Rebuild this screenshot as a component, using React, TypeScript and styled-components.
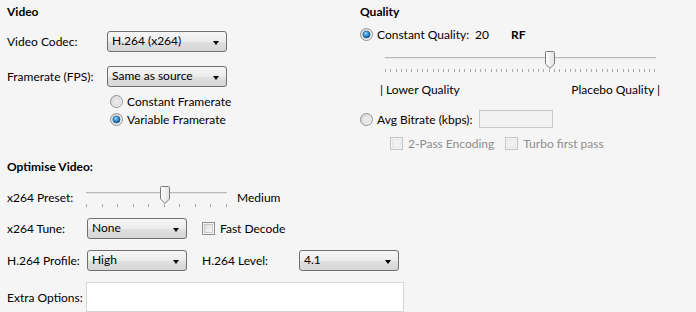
import styled, { createGlobalStyle } from "styled-components";

const GlobalStyle = createGlobalStyle`
  html, body {
    margin: 0;
    padding: 0;
    background: #f5f5f5;
  }
`;

const Page = styled.div`
  width: 696px;
  height: 312px;
  box-sizing: border-box;
  padding: 0 7px;
  overflow: hidden;
  background: #f5f5f5;
  color: #000;
  font-family: Lato, "Noto Sans", sans-serif;
  font-size: 12px;
`;

const Top = styled.div`
  display: flex;
  height: 152px;
`;

const Column = styled.div<{ $width?: number }>`
  display: flex;
  flex-direction: column;
  ${(p) => (p.$width ? `width: ${p.$width}px;` : "flex: 1;")}
`;

const SectionTitle = styled.div<{ $top?: number }>`
  margin-top: ${(p) => p.$top ?? 4}px;
  height: 16px;
  line-height: 16px;
  font-weight: 700;
`;

const Row = styled.div<{ $top: number; $height: number; $indent?: number }>`
  display: flex;
  align-items: center;
  margin-top: ${(p) => p.$top}px;
  height: ${(p) => p.$height}px;
  padding-left: ${(p) => p.$indent ?? 0}px;
  white-space: nowrap;
`;

const Label = styled.span<{ $width?: number; $disabled?: boolean; $left?: number }>`
  display: inline-block;
  ${(p) => (p.$width ? `width: ${p.$width}px;` : "")}
  margin-left: ${(p) => p.$left ?? 0}px;
  color: ${(p) => (p.$disabled ? "#8d8d8d" : "#000")};
`;

const Strong = styled.span<{ $left?: number }>`
  font-weight: 700;
  margin-left: ${(p) => p.$left ?? 0}px;
`;

const Value = styled.span<{ $left?: number }>`
  margin-left: ${(p) => p.$left ?? 0}px;
`;

const ComboBox = styled.div<{ $width: number }>`
  position: relative;
  box-sizing: border-box;
  width: ${(p) => p.$width}px;
  height: 21px;
  padding-left: 4px;
  line-height: 17px;
  border: 1px solid #707070;
  border-radius: 3px;
  background: linear-gradient(#f6f6f6 0%, #ececec 50%, #e0e0e0 51%, #d6d6d6 100%);
  &::after {
    content: "";
    position: absolute;
    right: 7px;
    top: 9px;
    border-left: 3.5px solid transparent;
    border-right: 3.5px solid transparent;
    border-top: 4px solid #000;
  }
`;

const TextBox = styled.div<{ $width: number; $height: number; $disabled?: boolean }>`
  box-sizing: border-box;
  width: ${(p) => p.$width}px;
  height: ${(p) => p.$height}px;
  border: 1px solid ${(p) => (p.$disabled ? "#c9c9c9" : "#d7d7d7")};
  background: ${(p) => (p.$disabled ? "#f2f2f2" : "#fff")};
`;

const Option = styled.div<{ $gap?: number; $left?: number }>`
  display: flex;
  align-items: center;
  gap: ${(p) => p.$gap ?? 4}px;
  margin-left: ${(p) => p.$left ?? 0}px;
  margin-right: 12px;
`;

const SliderBox = styled.div<{ $width: number; $left?: number }>`
  position: relative;
  width: ${(p) => p.$width}px;
  height: 22px;
  margin-left: ${(p) => p.$left ?? 0}px;
  flex: none;
`;

const Track = styled.div`
  margin-top: 6px;
  height: 1px;
  background: #b9b9b9;
  border-bottom: 1px solid #e6e6e6;
`;

const Ticks = styled.div`
  display: flex;
  justify-content: space-between;
  margin-top: 10px;
`;

const Tick = styled.span`
  width: 1px;
  height: 3px;
  background: #a9a9a9;
`;

const Thumb = styled.svg`
  position: absolute;
  top: 0;
`;

const ScaleLabels = styled.div`
  display: flex;
  justify-content: space-between;
  width: 280px;
  margin: 9px 0 0 20px;
  height: 16px;
  line-height: 16px;
`;

const Radio = ({ checked }: { checked?: boolean }) => (
  <svg width="13" height="13" viewBox="0 0 13 13">
    <defs>
      <linearGradient id="rOuter" x1="0" y1="0" x2="1" y2="1">
        <stop offset="0" stopColor="#d6d6d6" />
        <stop offset="1" stopColor="#fbfbfb" />
      </linearGradient>
      <radialGradient id="rDot" cx="0.4" cy="0.35" r="0.7">
        <stop offset="0" stopColor="#a8dcfb" />
        <stop offset="0.5" stopColor="#2b8fd6" />
        <stop offset="1" stopColor="#144a83" />
      </radialGradient>
    </defs>
    <circle cx="6.5" cy="6.5" r="6" fill="url(#rOuter)" stroke="#8f9091" />
    {checked ? (
      <circle cx="6.5" cy="6.5" r="3.6" fill="url(#rDot)" stroke="#1c5180" strokeWidth="0.6" />
    ) : (
      <circle cx="6.5" cy="6.5" r="3.8" fill="#e9e9e9" stroke="#d0d0d0" strokeWidth="0.6" />
    )}
  </svg>
);

const CheckBox = ({ disabled }: { disabled?: boolean }) => (
  <svg width="13" height="13" viewBox="0 0 13 13">
    <defs>
      <linearGradient id="cInner" x1="0" y1="0" x2="1" y2="1">
        <stop offset="0" stopColor="#d9d9d9" />
        <stop offset="1" stopColor="#fafafa" />
      </linearGradient>
    </defs>
    <rect x="0.5" y="0.5" width="12" height="12" fill="#f4f4f4" stroke={disabled ? "#c4c4c4" : "#8e8f8f"} />
    <rect
      x="2.5"
      y="2.5"
      width="8"
      height="8"
      fill={disabled ? "#f0f0f0" : "url(#cInner)"}
      stroke={disabled ? "#dedede" : "#b5b5b5"}
      strokeWidth="0.6"
    />
  </svg>
);

const Slider = ({
  width,
  ticks,
  position,
  left,
}: {
  width: number;
  ticks: number;
  position: number;
  left?: number;
}) => (
  <SliderBox $width={width} $left={left}>
    <Track />
    <Ticks>
      {Array.from({ length: ticks }, (_, i) => (
        <Tick key={i} />
      ))}
    </Ticks>
    <Thumb width="10" height="18" viewBox="0 0 10 18" style={{ left: Math.round(position * (width - 1)) - 4.5 }}>
      <defs>
        <linearGradient id="thumbFill" x1="0" y1="0" x2="1" y2="0">
          <stop offset="0" stopColor="#ffffff" />
          <stop offset="1" stopColor="#e2e2e2" />
        </linearGradient>
      </defs>
      <path
        d="M1.5 0.5 H8.5 A1 1 0 0 1 9.5 1.5 V13 L5 17.3 L0.5 13 V1.5 A1 1 0 0 1 1.5 0.5 Z"
        fill="url(#thumbFill)"
        stroke="#7a7a7a"
      />
    </Thumb>
  </SliderBox>
);

export default function App() {
  return (
    <Page>
      <GlobalStyle />
      <Top>
        <Column $width={353}>
          <SectionTitle>Video</SectionTitle>
          <Row $top={11} $height={21}>
            <Label $width={100}>Video Codec:</Label>
            <ComboBox $width={120}>H.264 (x264)</ComboBox>
          </Row>
          <Row $top={14} $height={21}>
            <Label $width={100}>Framerate (FPS):</Label>
            <ComboBox $width={120}>Same as source</ComboBox>
          </Row>
          <Row $top={5} $height={18} $indent={103}>
            <Option>
              <Radio />
              <Label>Constant Framerate</Label>
            </Option>
          </Row>
          <Row $top={0} $height={18} $indent={103}>
            <Option>
              <Radio checked />
              <Label>Variable Framerate</Label>
            </Option>
          </Row>
        </Column>
        <Column>
          <SectionTitle>Quality</SectionTitle>
          <Row $top={6} $height={16}>
            <Option>
              <Radio checked />
              <Label $width={87}>Constant Quality:</Label>
            </Option>
            <Value $left={-1}>20</Value>
            <Strong $left={22}>RF</Strong>
          </Row>
          <Row $top={9} $height={22}>
            <Slider width={271} ticks={52} position={31 / 51} left={25} />
          </Row>
          <ScaleLabels>
            <span>| Lower Quality</span>
            <span>Placebo Quality |</span>
          </ScaleLabels>
          <Row $top={12} $height={18}>
            <Option>
              <Radio />
              <Label $width={90}>Avg Bitrate (kbps):</Label>
            </Option>
            <TextBox $width={74} $height={18} $disabled />
          </Row>
          <Row $top={7} $height={16} $indent={30}>
            <Option $gap={5}>
              <CheckBox disabled />
              <Label $disabled>2-Pass Encoding</Label>
            </Option>
            <Option $gap={5} $left={-1}>
              <CheckBox disabled />
              <Label $disabled>Turbo first pass</Label>
            </Option>
          </Row>
        </Column>
      </Top>
      <SectionTitle $top={7}>Optimise Video:</SectionTitle>
      <Row $top={11} $height={22}>
        <Label $width={79}>x264 Preset:</Label>
        <Slider width={141} ticks={10} position={5 / 9} />
        <Label $left={10}>Medium</Label>
      </Row>
      <Row $top={10} $height={21}>
        <Label $width={80}>x264 Tune:</Label>
        <ComboBox $width={100}>None</ComboBox>
        <Option $gap={5} $left={15}>
          <CheckBox />
          <Label>Fast Decode</Label>
        </Option>
      </Row>
      <Row $top={11} $height={21}>
        <Label $width={80}>H.264 Profile:</Label>
        <ComboBox $width={100}>High</ComboBox>
        <Label $width={97} $left={15}>
          H.264 Level:
        </Label>
        <ComboBox $width={100}>4.1</ComboBox>
      </Row>
      <Row $top={11} $height={30}>
        <Label $width={79}>Extra Options:</Label>
        <TextBox $width={318} $height={30} />
      </Row>
    </Page>
  );
}
